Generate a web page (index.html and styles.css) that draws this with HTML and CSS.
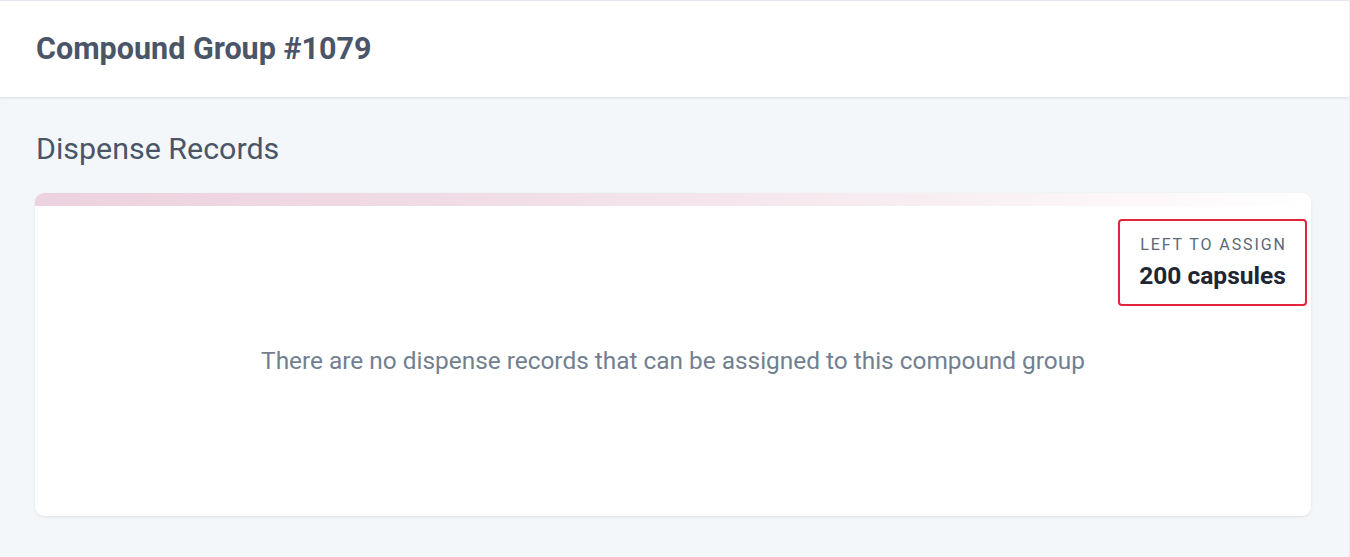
FILE: index.html
```html
<!DOCTYPE html>
<html>
<head>
<meta charset="utf-8">
<link rel="stylesheet" href="styles.css">
</head>
<body>
<header class="page-header">
  <h1 class="page-title">Compound Group #1079</h1>
</header>
<main class="content">
  <h2 class="section-title">Dispense Records</h2>
  <section class="card">
    <div class="card-band"></div>
    <div class="card-body">
      <div class="assign-row">
        <div class="assign-box">
          <div class="assign-label">LEFT TO ASSIGN</div>
          <div class="assign-value">200 capsules</div>
        </div>
      </div>
      <p class="empty-msg">There are no dispense records that can be assigned to this compound group</p>
    </div>
  </section>
</main>
</body>
</html>
```
FILE: styles.css
```css
* { box-sizing: border-box; }
html, body { margin: 0; padding: 0; }
body {
  width: 1350px;
  height: 557px;
  overflow: hidden;
  background: #f4f7fa;
  font-family: Roboto, "Noto Sans", Arial, sans-serif;
  border-right: 1px solid #e9edf2;
}
.page-header {
  height: 98px;
  background: #ffffff;
  border-top: 1px solid #e3e6ee;
  border-bottom: 1px solid #e4e7eb;
  box-shadow: 0 1px 2px rgba(0,0,0,0.05);
  display: flex;
  align-items: center;
  padding: 0 36px;
}
.page-title {
  margin: 0;
  font-size: 30.5px;
  line-height: 36px;
  font-weight: 700;
  color: #4a5567;
}
.content {
  padding: 35px 38px 0 35px;
}
.section-title {
  margin: 0 0 28px 1px;
  font-size: 30.4px;
  font-weight: 400;
  color: #4a5567;
  line-height: 32px;
}
.card {
  background: #ffffff;
  border-radius: 9px;
  overflow: hidden;
  box-shadow: 0 1px 3px rgba(0,0,0,0.09);
  height: 323px;
  display: flex;
  flex-direction: column;
}
.card-band {
  height: 13px;
  background: linear-gradient(90deg, #ecd2de 0%, #f0dde6 35%, #f8eef2 70%, #ffffff 100%);
}
.card-body {
  flex: 1;
  display: flex;
  flex-direction: column;
  padding: 13px 4px 0 0;
}
.assign-row {
  display: flex;
  justify-content: flex-end;
}
.assign-box {
  width: 189px;
  height: 87px;
  border: 2px solid #e2243d;
  border-radius: 4px;
  display: flex;
  flex-direction: column;
  align-items: center;
  justify-content: center;
  gap: 7px;
}
.assign-label {
  font-size: 16px;
  line-height: 20px;
  letter-spacing: 1.9px;
  color: #5d6778;
  padding-left: 2px;
}
.assign-value {
  font-size: 24.5px;
  line-height: 28px;
  font-weight: 700;
  color: #1e2533;
}
.empty-msg {
  margin: 40px 0 0 0;
  text-align: center;
  font-size: 24.4px;
  line-height: 30px;
  color: #727f91;
  padding-left: 4px;
}
```
